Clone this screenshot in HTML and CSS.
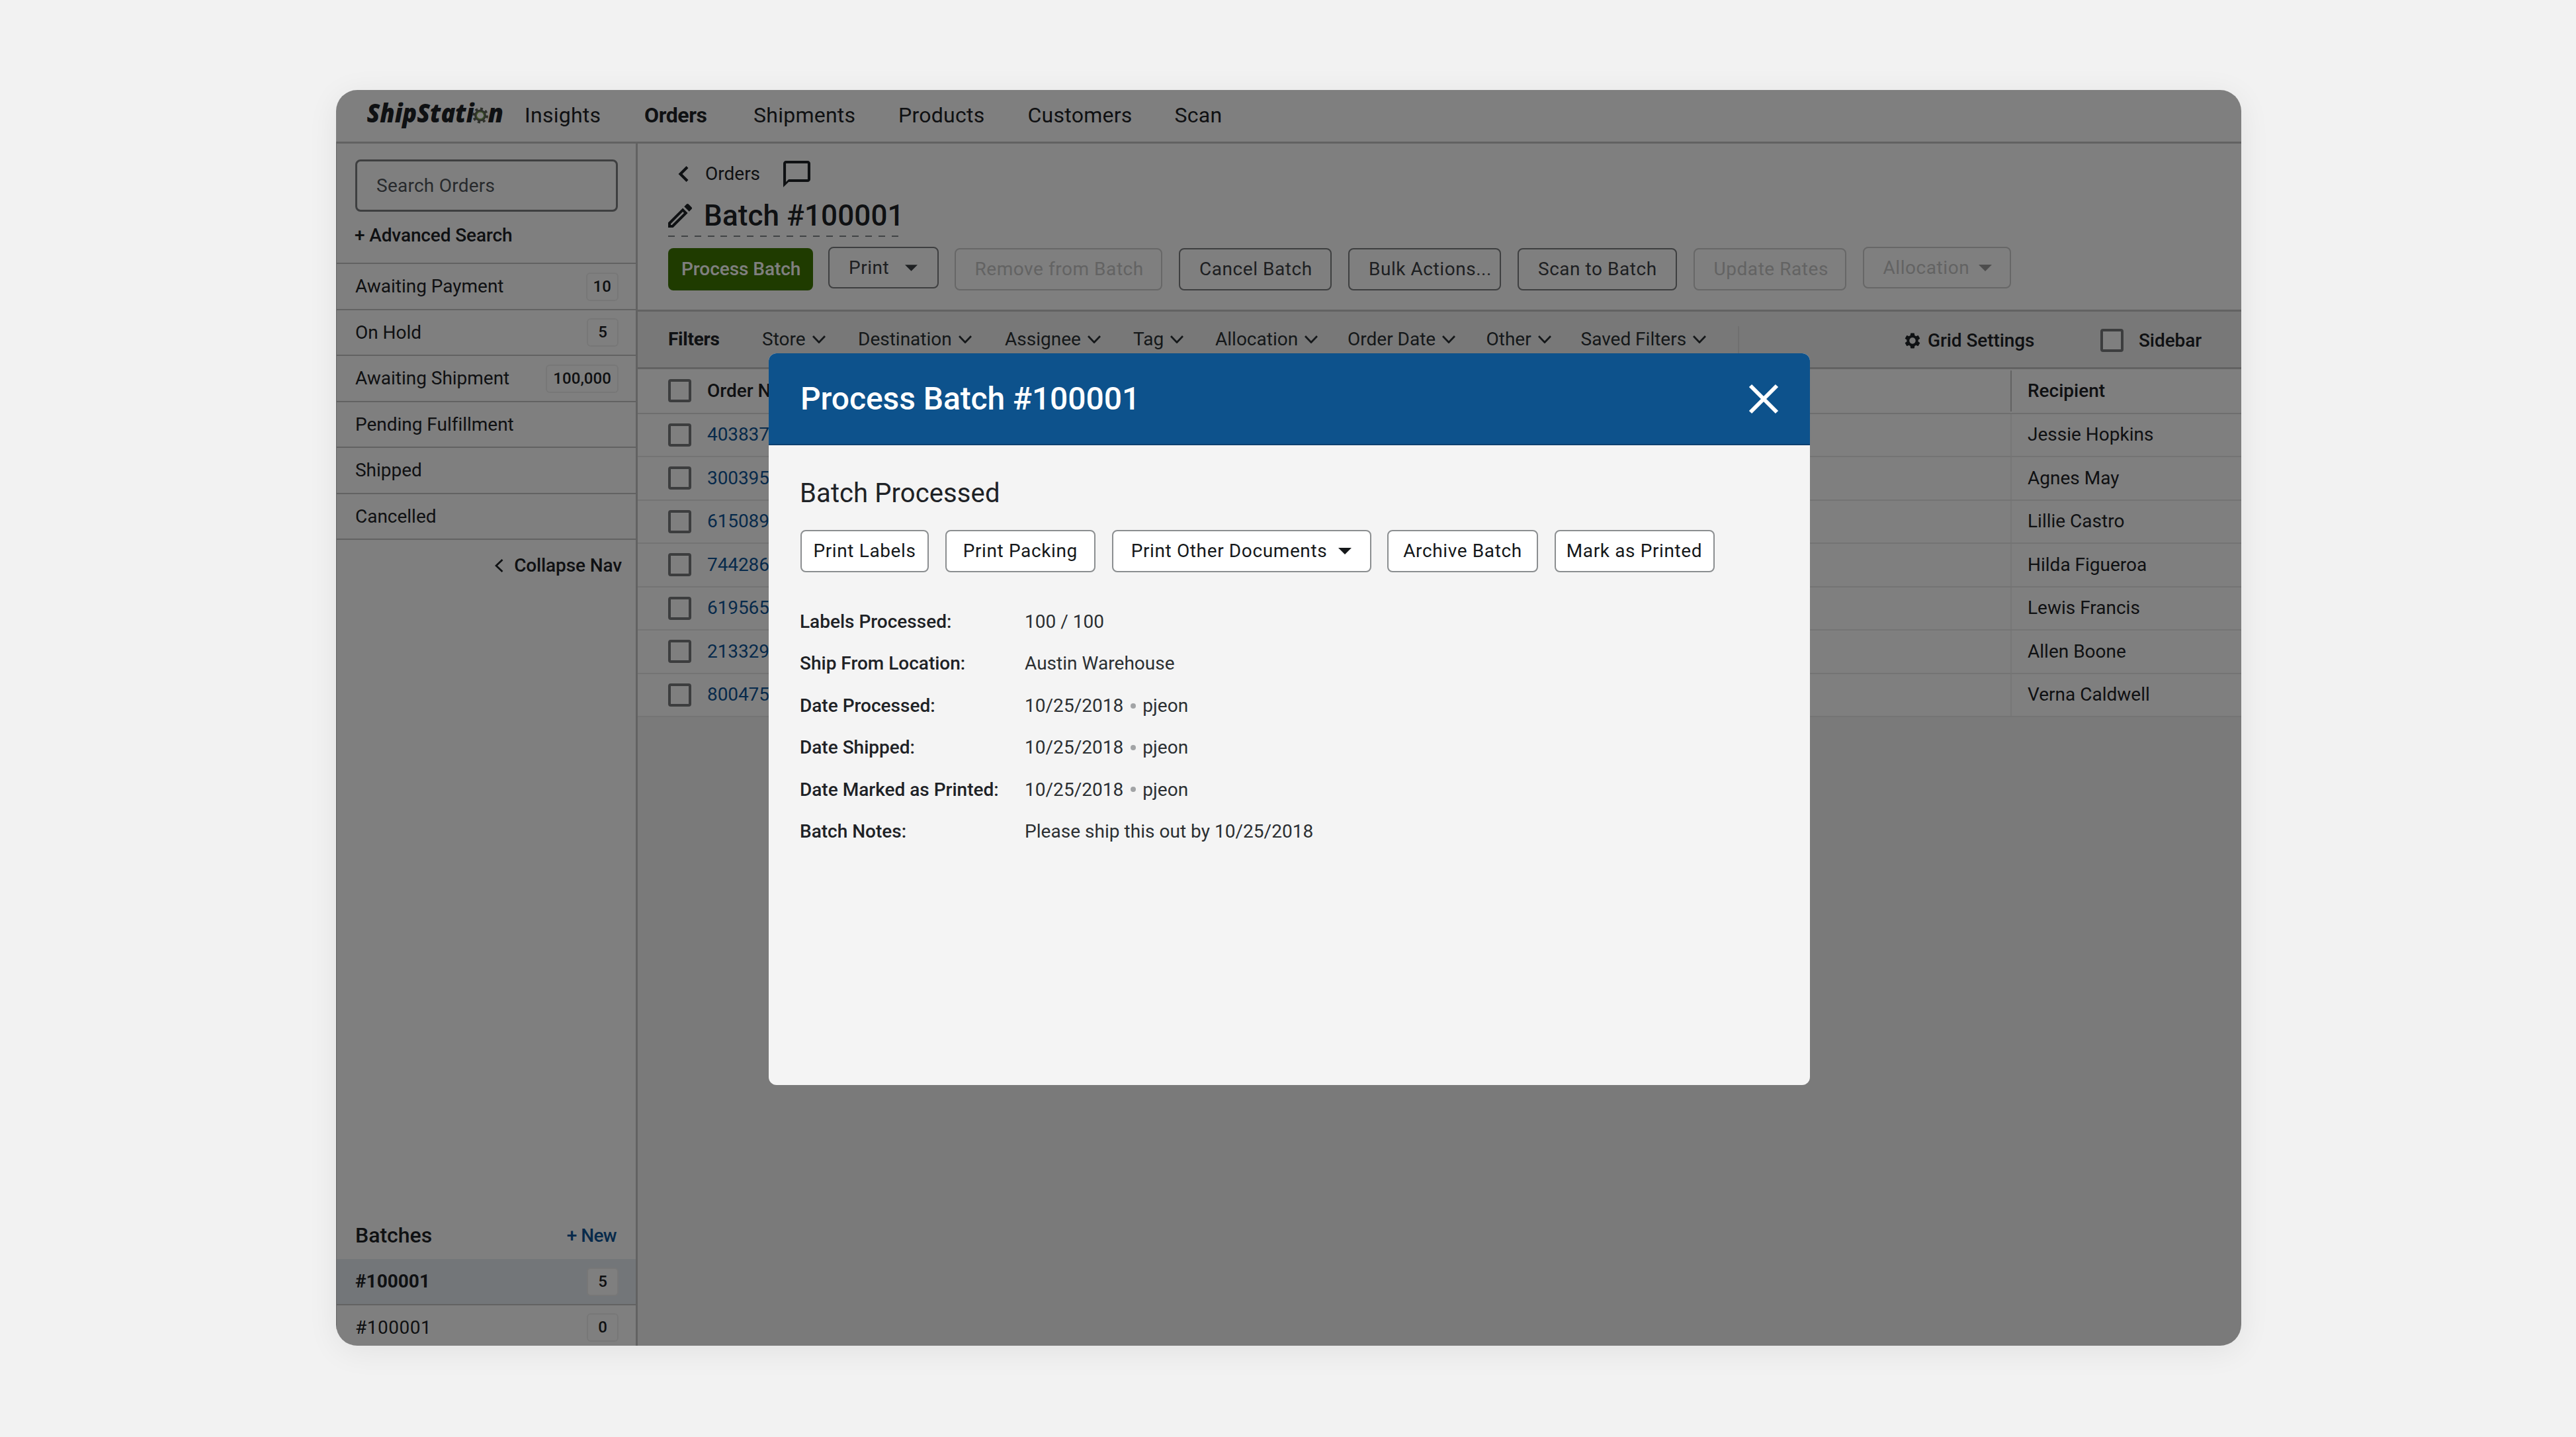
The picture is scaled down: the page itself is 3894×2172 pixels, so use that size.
FILE: index.html
```html
<!DOCTYPE html>
<html lang="en">
<head>
    <meta charset="UTF-8">
    <meta name="viewport" content="width=device-width, initial-scale=1.0">
    <title>ShipStation - Batch #100001</title>
    <link rel="stylesheet" href="styles.css">
</head>
<body>
    <!-- Shared icons -->
    <svg class="sprite" width="0" height="0">
        <symbol id="chev-down" viewBox="0 0 20 12"><path d="M1 1l9 9.5L19 1" fill="none" stroke="currentColor" stroke-width="2.8"/></symbol>
        <symbol id="caret" viewBox="0 0 20 10"><path d="M0 0h20L10 10z" fill="currentColor"/></symbol>
        <symbol id="gear" viewBox="2 2 20 20"><path fill="currentColor" fill-rule="evenodd" d="M19.14 12.94c.04-.3.06-.61.06-.94 0-.32-.02-.64-.07-.94l2.03-1.58c.18-.14.23-.41.12-.61l-1.92-3.32c-.12-.22-.37-.29-.59-.22l-2.39.96c-.5-.38-1.03-.7-1.62-.94l-.36-2.54c-.04-.24-.24-.41-.48-.41h-3.84c-.24 0-.43.17-.47.41l-.36 2.54c-.59.24-1.13.57-1.62.94l-2.39-.96c-.22-.08-.47 0-.59.22L2.74 8.87c-.12.21-.08.47.12.61l2.03 1.58c-.05.3-.09.63-.09.94s.02.64.07.94l-2.03 1.58c-.18.14-.23.41-.12.61l1.92 3.32c.12.22.37.29.59.22l2.39-.96c.5.38 1.03.7 1.62.94l.36 2.54c.05.24.24.41.48.41h3.84c.24 0 .44-.17.47-.41l.36-2.54c.59-.24 1.13-.56 1.62-.94l2.39.96c.22.08.47 0 .59-.22l1.92-3.32c.12-.22.07-.47-.12-.61l-2.01-1.58zM12 15.9c-2.15 0-3.9-1.75-3.9-3.9s1.75-3.9 3.9-3.9 3.9 1.75 3.9 3.9-1.75 3.9-3.9 3.9z"/></symbol>
    </svg>

    <div class="app">
        <!-- Top Navigation -->
        <header class="topbar">
            <svg class="logo" width="212" height="60" viewBox="0 0 212 60">
                <text x="1.500" y="39" textLength="162" lengthAdjust="spacingAndGlyphs">ShipStati</text>
                <circle class="logo-teeth" cx="173" cy="28.500" r="10" pathLength="16"/>
                <circle class="logo-ring" cx="173" cy="28.500" r="7"/>
                <circle class="logo-core" cx="173" cy="28.500" r="5.6"/>
                <text x="184.500" y="39" textLength="23.500" lengthAdjust="spacingAndGlyphs">n</text>
            </svg>
            <nav class="topnav">
                <a>Insights</a>
                <a class="active">Orders</a>
                <a>Shipments</a>
                <a>Products</a>
                <a>Customers</a>
                <a>Scan</a>
            </nav>
        </header>

        <div class="body">
            <!-- Sidebar -->
            <aside class="sidebar">
                <div class="search-block">
                    <div class="search">Search Orders</div>
                    <div class="advanced">+ Advanced Search</div>
                </div>
                <div class="side-row">Awaiting Payment <span class="count">10</span></div>
                <div class="side-row">On Hold <span class="count">5</span></div>
                <div class="side-row">Awaiting Shipment <span class="count">100,000</span></div>
                <div class="side-row">Pending Fulfillment</div>
                <div class="side-row">Shipped</div>
                <div class="side-row">Cancelled</div>
                <div class="collapse">
                    <svg width="13" height="20" viewBox="0 0 13 20"><path d="M11.5 1L2 10l9.5 9" fill="none" stroke="currentColor" stroke-width="2.8"/></svg>
                    Collapse Nav
                </div>
                <div class="batches">
                    <div class="batches-head"><span class="batches-title">Batches</span><a class="new">+ New</a></div>
                    <div class="side-row selected">#100001 <span class="count">5</span></div>
                    <div class="side-row plain">#100001 <span class="count">0</span></div>
                </div>
            </aside>

            <!-- Batch page -->
            <main class="main">
                <section class="page-head">
                    <div class="crumbs">
                        <svg class="back" width="16" height="24" viewBox="0 0 16 24"><path d="M14 1.5L3.5 12 14 22.5" fill="none" stroke="currentColor" stroke-width="4.2"/></svg>
                        <span>Orders</span>
                        <svg class="comment" width="41" height="40" viewBox="2 2 20 20" preserveAspectRatio="none"><path fill="currentColor" d="M20 2H4c-1.1 0-2 .9-2 2v18l4-4h14c1.1 0 2-.9 2-2V4c0-1.1-.9-2-2-2zm0 14H6l-2 2V4h16v12z"/></svg>
                    </div>
                    <div class="title">
                        <svg width="36" height="36" viewBox="3 3 18 18"><path fill="currentColor" d="M14.06 9.02l.92.92L5.92 19H5v-.92l9.06-9.06M17.66 3c-.25 0-.51.1-.7.29l-1.83 1.83 3.75 3.75 1.83-1.83c.39-.39.39-1.02 0-1.41l-2.34-2.34c-.2-.2-.45-.29-.71-.29zm-3.6 3.19L3 17.25V21h3.75L17.81 9.94l-3.75-3.75z"/></svg>
                        <h1>Batch #100001</h1>
                    </div>
                    <div class="actions">
                        <button class="btn primary">Process Batch</button>
                        <button class="btn print menu">Print <svg width="19" height="10"><use href="#caret"/></svg></button>
                        <button class="btn remove disabled">Remove from Batch</button>
                        <button class="btn">Cancel Batch</button>
                        <button class="btn">Bulk Actions...</button>
                        <button class="btn scan">Scan to Batch</button>
                        <button class="btn disabled">Update Rates</button>
                        <button class="btn alloc menu disabled">Allocation <svg width="20" height="10"><use href="#caret"/></svg></button>
                    </div>
                </section>

                <section class="filters">
                    <b>Filters</b>
                    <span class="filter">Store <svg><use href="#chev-down"/></svg></span>
                    <span class="filter">Destination <svg><use href="#chev-down"/></svg></span>
                    <span class="filter">Assignee <svg><use href="#chev-down"/></svg></span>
                    <span class="filter">Tag <svg><use href="#chev-down"/></svg></span>
                    <span class="filter">Allocation <svg><use href="#chev-down"/></svg></span>
                    <span class="filter">Order Date <svg><use href="#chev-down"/></svg></span>
                    <span class="filter">Other <svg><use href="#chev-down"/></svg></span>
                    <span class="filter">Saved Filters <svg><use href="#chev-down"/></svg></span>
                    <span class="divider"></span>
                    <span class="tool"><svg class="gear"><use href="#gear"/></svg>Grid Settings</span>
                    <span class="tool toggle"><i class="check"></i>Sidebar</span>
                </section>

                <section class="grid">
                    <div class="grid-row grid-head"><i class="check"></i><span>Order N</span><span class="recipient">Recipient</span></div>
                    <div class="grid-row"><i class="check"></i><a>403837</a><span class="recipient">Jessie Hopkins</span></div>
                    <div class="grid-row"><i class="check"></i><a>300395</a><span class="recipient">Agnes May</span></div>
                    <div class="grid-row"><i class="check"></i><a>615089</a><span class="recipient">Lillie Castro</span></div>
                    <div class="grid-row"><i class="check"></i><a>744286</a><span class="recipient">Hilda Figueroa</span></div>
                    <div class="grid-row"><i class="check"></i><a>619565</a><span class="recipient">Lewis Francis</span></div>
                    <div class="grid-row"><i class="check"></i><a>213329</a><span class="recipient">Allen Boone</span></div>
                    <div class="grid-row"><i class="check"></i><a>800475</a><span class="recipient">Verna Caldwell</span></div>
                </section>
            </main>
        </div>

        <div class="overlay"></div>

        <!-- Process Batch modal -->
        <div class="modal">
            <div class="modal-head">
                <h2>Process Batch #100001</h2>
                <svg width="46" height="46" viewBox="0 0 46 46"><path d="M3 3l40 40M43 3L3 43" stroke="#fff" stroke-width="6"/></svg>
            </div>
            <div class="modal-body">
                <h3>Batch Processed</h3>
                <div class="modal-actions">
                    <button class="btn labels">Print Labels</button>
                    <button class="btn packing">Print Packing</button>
                    <button class="btn documents">Print Other Documents <svg width="20" height="10"><use href="#caret"/></svg></button>
                    <button class="btn archive">Archive Batch</button>
                    <button class="btn mark">Mark as Printed</button>
                </div>
                <dl class="details">
                    <dt>Labels Processed:</dt><dd>100 / 100</dd>
                    <dt>Ship From Location:</dt><dd>Austin Warehouse</dd>
                    <dt>Date Processed:</dt><dd>10/25/2018<i class="dot"></i>pjeon</dd>
                    <dt>Date Shipped:</dt><dd>10/25/2018<i class="dot"></i>pjeon</dd>
                    <dt>Date Marked as Printed:</dt><dd>10/25/2018<i class="dot"></i>pjeon</dd>
                    <dt>Batch Notes:</dt><dd>Please ship this out by 10/25/2018</dd>
                </dl>
            </div>
        </div>
    </div>
</body>
</html>
```
FILE: styles.css
```css
:root {
    --text: #1e2226;
    --muted: #3c4044;
    --line: #c4c4c4;
    --line-light: #e8e8e8;
    --disabled: #c6c6c6;
    --btn-border: #7c7e80;
    --link: #0f5596;
    --blue: #0d528c;
    --green: #3f7600;
}

* {
    margin: 0;
    padding: 0;
    box-sizing: border-box;
}

body {
    background: #f2f2f2;
    color: var(--text);
    font: 28px/34px Roboto, "Liberation Sans", sans-serif;
    height: 2172px;
    overflow: hidden;
    padding: 136px 506px 138px 508px;
}

.sprite {
    position: absolute;
}

svg {
    flex: none;
    display: block;
}

.app {
    position: relative;
    display: flex;
    flex-direction: column;
    height: 1898px;
    border-radius: 32px;
    overflow: hidden;
    background: #fff;
    box-shadow: 0 8px 48px rgba(0, 0, 0, 0.07);
}

/* Top Navigation */
.topbar {
    display: flex;
    height: 81px;
    border-bottom: 3px solid var(--line);
    padding: 10px 0 0 45px;
    white-space: nowrap;
}

.logo {
    overflow: visible;
}

.logo text {
    font: italic 800 38px "Open Sans", "Noto Sans", sans-serif;
    fill: var(--text);
}

.logo circle {
    fill: none;
}

.logo-teeth {
    stroke: #5c6256;
    stroke-width: 4;
    stroke-dasharray: 1 1;
}

.logo-ring {
    stroke: #5c6256;
    stroke-width: 3.8;
}

.logo-core {
    stroke: #7fae4a;
    stroke-width: 1.2;
}

.topnav {
    display: grid;
    grid-template-columns: 181px 165px 219px 195.5px 222px auto;
    align-items: start;
    padding: 11px 0 0 28px;
    font-size: 32px;
    letter-spacing: 0.25px;
}

.topnav .active {
    font-weight: 700;
    letter-spacing: -0.4px;
}

.body {
    display: flex;
    flex: 1;
    min-height: 0;
}

/* Sidebar */
.sidebar {
    display: flex;
    flex-direction: column;
    width: 456px;
    border-right: 3px solid var(--line);
    border-left: 1px solid var(--line);
    font-weight: 500;
    letter-spacing: -0.12px;
    overflow: hidden;
}

.search-block {
    height: 182px;
    flex: none;
    border-bottom: 2px solid var(--line);
    padding: 24px 27px 0 28px;
}

.search {
    height: 79px;
    border: 3px solid var(--btn-border);
    border-radius: 8px;
    padding: 20px 29px;
    color: #50555a;
    font-weight: 400;
    letter-spacing: 0.25px;
}

.advanced {
    margin: 19px 0 0 -1px;
}

.side-row {
    display: flex;
    align-items: center;
    justify-content: space-between;
    flex: none;
    height: 69.5px;
    border-bottom: 2px solid var(--line);
    padding: 1px 26px 0 28px;
    font-weight: 400;
    letter-spacing: -0.02px;
}

.count {
    min-width: 48px;
    height: 43px;
    border: 2px solid #efefef;
    border-radius: 6px;
    background: #fff;
    padding: 0 9px;
    font-size: 24px;
    font-weight: 500;
    line-height: 38px;
    letter-spacing: 0.07px;
    text-align: center;
}

.collapse {
    display: flex;
    align-items: center;
    justify-content: flex-end;
    gap: 16px;
    height: 78px;
    padding-right: 21px;
}

.batches {
    margin: auto 0 -8px;
}

.batches-head {
    display: flex;
    justify-content: space-between;
    height: 56px;
    padding: 3px 29px 0 28px;
}

.batches-title {
    font-size: 32px;
    letter-spacing: 0;
}

.new {
    color: var(--link);
    letter-spacing: -0.6px;
    padding-top: 1px;
}

.side-row.selected {
    background: #e6ecf2;
    font-weight: 700;
    letter-spacing: 0;
}

.side-row.plain {
    letter-spacing: 0.5px;
}

/* Page head */
.main {
    flex: 1;
    background: #f4f4f4;
    letter-spacing: 0;
    min-width: 0;
}

.page-head {
    height: 254px;
    background: #fff;
    border-bottom: 3px solid var(--line);
    padding: 25px 0 0 46px;
}

.crumbs {
    display: flex;
    align-items: center;
    height: 41px;
    padding-left: 15px;
}

.crumbs span {
    margin: 0 35px 0 25px;
}

.title {
    display: inline-flex;
    align-items: center;
    gap: 18px;
    height: 75px;
    padding-top: 11px;
    background: repeating-linear-gradient(90deg, #80868a 0 10px, transparent 10px 19.9px) bottom / 100% 2px no-repeat;
    vertical-align: top;
}

.title h1 {
    font-size: 44px;
    font-weight: 500;
    letter-spacing: 0.12px;
    line-height: 48px;
}

.actions {
    display: flex;
    gap: 24.8px;
    padding-top: 17px;
}

.btn {
    display: flex;
    align-items: center;
    width: 231.2px;
    height: 64px;
    border: 2.5px solid var(--btn-border);
    border-radius: 8px;
    background: #fff;
    color: var(--muted);
    padding-left: 29px;
    font: inherit;
    letter-spacing: 0.55px;
    white-space: nowrap;
}

.btn.primary {
    width: 218.5px;
    border: 0;
    background: var(--green);
    color: #fff;
    font-weight: 500;
    letter-spacing: -0.05px;
    padding-left: 20px;
    margin-right: -1.3px;
}

.btn.menu {
    height: 63px;
    margin-top: -2px;
}

.btn.print {
    width: 167px;
    margin-right: -1.3px;
}

.btn.print svg {
    margin-left: 24px;
}

.btn.remove {
    width: 314.7px;
}

.btn.scan {
    width: 240.8px;
}

.btn.alloc {
    width: 224px;
    padding-left: 29px;
}

.btn.alloc svg {
    margin-left: 14px;
}

.btn.disabled {
    border-color: #cecece;
    color: var(--disabled);
}

.btn.alloc svg {
    color: #9a9a9a;
}

/* Filters */
.filters {
    display: grid;
    grid-template-columns: 142px 145px 222px 194px 124px 200px 209.5px 143px 237.5px 252px 296px auto;
    align-items: center;
    height: 87px;
    background: #f0f0f0;
    border-bottom: 3px solid var(--line);
    padding-left: 46px;
    white-space: nowrap;
}

.filters b {
    letter-spacing: -0.25px;
}

.filter {
    display: flex;
    align-items: center;
    gap: 10px;
    color: #2b3034;
}

.filter svg {
    width: 20px;
    height: 12px;
}

.divider {
    align-self: end;
    width: 2px;
    height: 62px;
    background: #dedede;
}

.tool {
    display: flex;
    align-items: center;
    gap: 11px;
    padding-top: 3px;
    font-weight: 500;
    letter-spacing: -0.08px;
}

.toggle {
    gap: 23px;
}

.gear {
    width: 24px;
    height: 24px;
}

.check {
    flex: none;
    width: 35px;
    height: 35px;
    border: 4px solid #797b7d;
    border-radius: 4px;
    background: #fff;
}

/* Orders grid */
.grid-row {
    display: grid;
    grid-template-columns: 59px 1970px 1fr;
    align-items: center;
    height: 65.5px;
    background: #fff;
    border-bottom: 2px solid var(--line-light);
    padding-left: 46px;
}

.grid-row a {
    color: var(--link);
    letter-spacing: -0.1px;
}

.grid-head {
    height: 67.5px;
    font-weight: 500;
    border-bottom-color: #dcdcdc;
}

.recipient {
    align-self: stretch;
    display: flex;
    align-items: center;
    border-left: 2px solid #efefef;
    padding-left: 24px;
}

.grid-head .recipient {
    border-left-color: var(--line);
    margin: 2px 0;
}

/* Modal */
.overlay {
    position: absolute;
    inset: 0;
    background: rgba(0, 0, 0, 0.5);
}

.modal {
    position: absolute;
    left: 654px;
    top: 398px;
    width: 1574px;
    height: 1106px;
    border-radius: 12px;
    background: #f4f4f4;
    overflow: hidden;
}

.modal-head {
    display: flex;
    align-items: center;
    justify-content: space-between;
    height: 139px;
    background: var(--blue);
    border-bottom: 2px solid #0c4070;
    padding: 0 47px 0 48px;
    color: #fff;
}

.modal-head h2 {
    font-size: 48px;
    font-weight: 500;
    letter-spacing: -0.08px;
    line-height: 60px;
}

.modal-body {
    padding: 48px 46px 0 47px;
}

.modal-body h3 {
    font-size: 40px;
    font-weight: 400;
    letter-spacing: 0.1px;
    line-height: 50px;
}

.modal-actions {
    display: flex;
    gap: 24.5px;
    margin: 30px 0 0 1px;
}

.modal-actions .btn {
    border-color: #8b8e90;
    color: #15181a;
    letter-spacing: 0.62px;
    padding: 0;
    justify-content: center;
}

.btn.labels {
    width: 194px;
}

.btn.packing {
    width: 227.5px;
}

.btn.documents {
    width: 392px;
}

.btn.documents svg {
    margin-left: 17px;
}

.btn.archive {
    width: 228px;
}

.btn.mark {
    width: 242px;
}

.details {
    display: grid;
    grid-template-columns: 340px auto;
    margin-top: 43px;
    line-height: 63.4px;
}

.details dt {
    font-weight: 500;
}

.details dd {
    display: flex;
    align-items: center;
    color: #2b2f32;
    letter-spacing: 0.03px;
}

.dot {
    width: 8px;
    height: 8px;
    border-radius: 50%;
    background: #a2a4a6;
    margin: 0 10px 0 11px;
}
```
